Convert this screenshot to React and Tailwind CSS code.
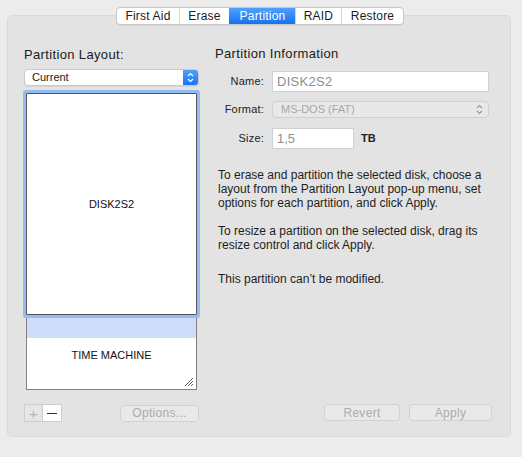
import React from 'react';

const tabs = ['First Aid', 'Erase', 'Partition', 'RAID', 'Restore'];

const Chevrons = ({ color = '#fff' }) => (
  <svg width="7" height="11" viewBox="0 0 7 11" fill="none">
    <path d="M1 4 L3.5 1.5 L6 4" stroke={color} strokeWidth="1.2" />
    <path d="M1 7 L3.5 9.5 L6 7" stroke={color} strokeWidth="1.2" />
  </svg>
);

const GhostButton = ({ children, className = '' }) => (
  <div
    className={`h-[17px] flex items-center justify-center rounded-[4px] border border-[#d2d2d2] bg-[#e9e9e9] text-[12px] text-[#ababab] tracking-[0.3px] ${className}`}
  >
    {children}
  </div>
);

export default function App() {
  return (
    <div className="w-[522px] h-[457px] bg-[#ececec] pt-[15px] pl-[7px] font-['Liberation_Sans',Arial,sans-serif] text-[#1e1e1e]">
      <div className="relative w-[504px] h-[422px] bg-[#e3e3e3] border border-[#dadada] rounded-[5px] flex pl-[16px] pt-[31px]">
        {/* segmented tabs */}
        <div className="absolute top-[-9px] left-[108px] h-[18px] flex rounded-[4px] border border-[#c6c6c6] bg-white shadow-[0_1px_0_rgba(0,0,0,0.05)] overflow-hidden text-[12px] tracking-[0.2px]">
          {tabs.map((t, i) => (
            <div
              key={t}
              className={`flex items-center justify-center ${i > 0 ? 'border-l border-[#d4d4d4]' : ''} ${
                t === 'Partition' ? 'bg-gradient-to-b from-[#4ea1fb] to-[#1271f4] text-white border-transparent' : 'text-[#1b1b1b]'
              } ${['w-[62px]', 'w-[50px]', 'w-[66px]', 'w-[46px]', 'w-[62px]'][i]}`}
            >
              {t}
            </div>
          ))}
        </div>

        {/* left column */}
        <div className="w-[175px] flex flex-col">
          <div className="text-[13px] leading-[16px] tracking-[0.35px] text-[#1a1a1a]">Partition Layout:</div>
          <div className="mt-[6px] h-[17px] flex items-center rounded-[4px] border border-[#cacaca] bg-white shadow-[0_1px_0_rgba(0,0,0,0.06)] overflow-hidden">
            <span className="flex-1 pl-[7px] text-[11px] text-[#222]">Current</span>
            <div className="w-[15px] h-full bg-gradient-to-b from-[#4fa0fb] to-[#1574f4] flex items-center justify-center">
              <Chevrons />
            </div>
          </div>

          <div className="mt-[7px] mx-[2px] flex flex-col">
            <div className="h-[222px] bg-white border border-[#555] rounded-[1px] shadow-[0_0_0_3px_#93bcf2] flex items-center justify-center text-[11px] text-[#111] relative z-10">
              DISK2S2
            </div>
            <div className="h-[75px] bg-white border-x border-b border-[#808080] flex flex-col pt-[3px] relative">
              <div className="h-[20px] bg-[#cfdcfa]" />
              <div className="flex-1 flex items-start justify-center pt-[9px] text-[11px] text-[#111]">TIME MACHINE</div>
              <svg className="absolute right-[2px] bottom-[2px]" width="10" height="10" viewBox="0 0 10 10">
                <path d="M9 1 L1 9 M9 4 L4 9 M9 7 L7 9" stroke="#555" strokeWidth="0.9" />
              </svg>
            </div>
          </div>

          <div className="mt-[14px] flex items-center">
            <div className="flex h-[18px] border border-[#cdcdcd]">
              <div className="w-[18px] flex items-center justify-center bg-[#e6e6e6] text-[#b5b5b5] text-[15px] leading-none border-r border-[#cdcdcd]">+</div>
              <div className="w-[18px] flex items-center justify-center bg-white">
                <div className="w-[10px] h-[1px] bg-[#333]" />
              </div>
            </div>
            <GhostButton className="ml-auto w-[79px]">Options...</GhostButton>
          </div>
        </div>

        {/* right column */}
        <div className="ml-[16px] w-[280px] flex flex-col">
          <div className="text-[13px] leading-[16px] tracking-[0.35px] text-[#1a1a1a] -mt-[1px]">Partition Information</div>

          <div className="mt-[9px] flex items-center">
            <span className="w-[49px] text-right text-[11px] tracking-[0.2px] text-[#222]">Name:</span>
            <div className="ml-[8px] w-[217px] h-[21px] bg-white border border-[#d0d0d0] flex items-center pl-[4px] text-[13px] text-[#8e8e8e] tracking-[0.3px]">
              DISK2S2
            </div>
          </div>

          <div className="mt-[9px] flex items-center">
            <span className="w-[49px] text-right text-[11px] tracking-[0.2px] text-[#222]">Format:</span>
            <div className="ml-[8px] w-[217px] h-[17px] rounded-[4px] bg-[#e8e8e8] border border-[#d0d0d0] flex items-center pl-[8px] pr-[5px] text-[11px] text-[#a9a9a9]">
              <span className="flex-1">MS-DOS (FAT)</span>
              <Chevrons color="#9a9a9a" />
            </div>
          </div>

          <div className="mt-[10px] flex items-center">
            <span className="w-[49px] text-right text-[11px] tracking-[0.2px] text-[#222]">Size:</span>
            <div className="ml-[8px] w-[82px] h-[21px] bg-white border border-[#d0d0d0] flex items-center pl-[4px] text-[13px] text-[#8e8e8e]">
              1,5
            </div>
            <span className="ml-[7px] text-[11px] font-semibold text-[#222]">TB</span>
          </div>

          <div className="mt-[19px] ml-[3px] text-[12px] leading-[14px] whitespace-nowrap text-[#1e1e1e]">
            <p>
              To erase and partition the selected disk, choose a<br />
              layout from the Partition Layout pop-up menu, set<br />
              options for each partition, and click Apply.
            </p>
            <p className="mt-[14px]">
              To resize a partition on the selected disk, drag its<br />
              resize control and click Apply.
            </p>
            <p className="mt-[20px]">This partition can’t be modified.</p>
          </div>

          <div className="mt-auto mb-[15px] flex gap-[9px] ml-[109px]">
            <GhostButton className="w-[76px]">Revert</GhostButton>
            <GhostButton className="w-[83px]">Apply</GhostButton>
          </div>
        </div>
      </div>
    </div>
  );
}
